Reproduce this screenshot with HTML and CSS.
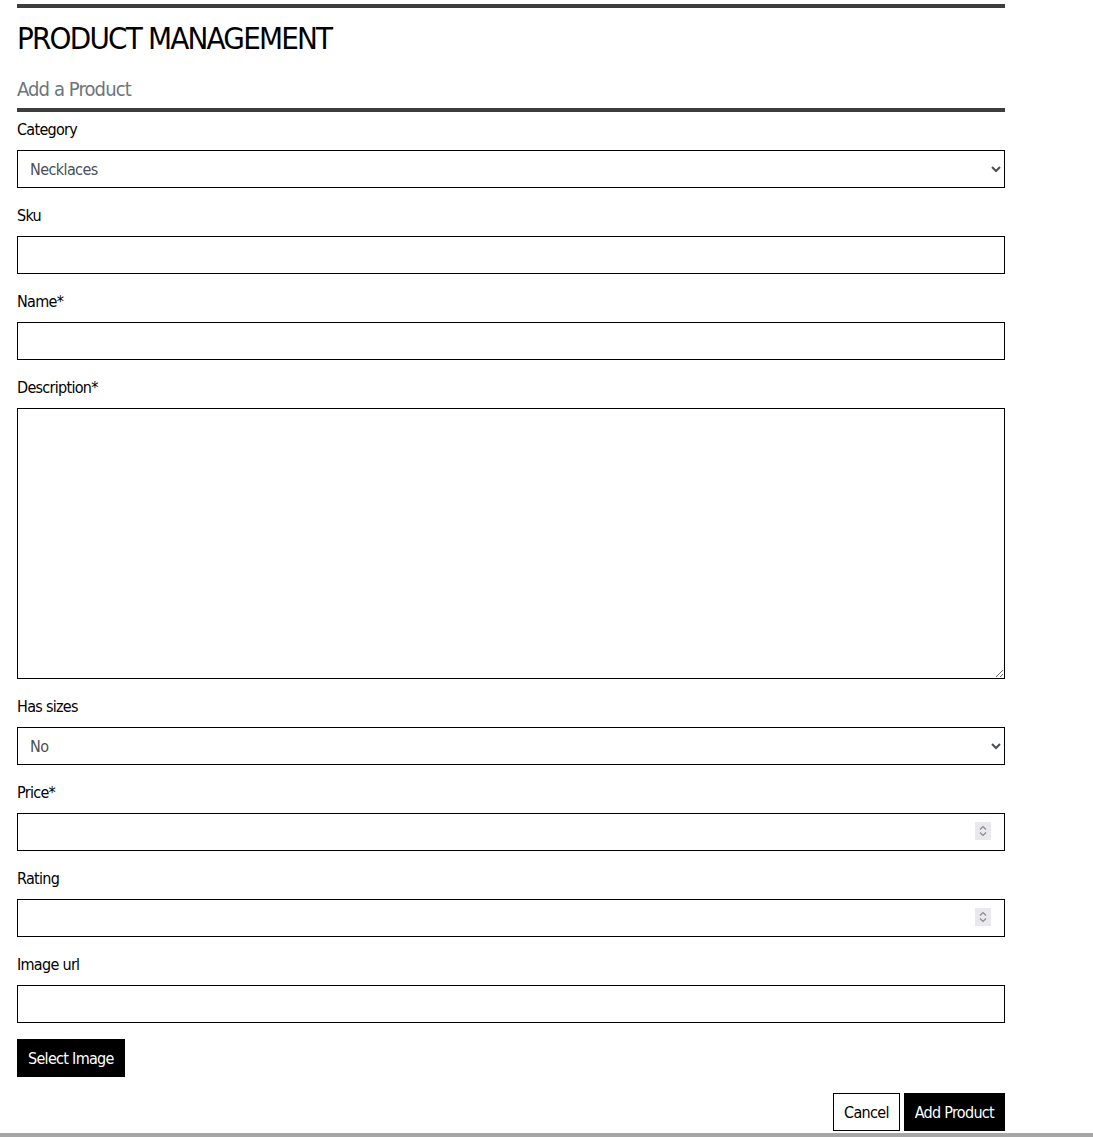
FILE: index.html
```html
<!DOCTYPE html>
<html lang="en">
<head>
    <meta charset="UTF-8">
    <meta name="viewport" content="width=device-width, initial-scale=1.0">
    <title>Product Management</title>
    <link rel="stylesheet" href="styles.css">
</head>
<body>
    <div class="page">
        <div class="rule"></div>
        <h1 class="page-title">PRODUCT MANAGEMENT</h1>
        <h2 class="sub-title">Add a Product</h2>
        <div class="rule"></div>

        <form class="product-form">
            <div class="field">
                <label for="category">Category</label>
                <select id="category" name="category">
                    <option>Necklaces</option>
                    <option>Rings</option>
                    <option>Earrings</option>
                </select>
            </div>
            <div class="field">
                <label for="sku">Sku</label>
                <input type="text" id="sku" name="sku">
            </div>
            <div class="field">
                <label for="name">Name*</label>
                <input type="text" id="name" name="name">
            </div>
            <div class="field">
                <label for="description">Description*</label>
                <textarea id="description" name="description"></textarea>
            </div>
            <div class="field">
                <label for="has_sizes">Has sizes</label>
                <select id="has_sizes" name="has_sizes">
                    <option>No</option>
                    <option>Yes</option>
                </select>
            </div>
            <div class="field">
                <label for="price">Price*</label>
                <div class="number-wrap">
                    <input type="number" id="price" name="price" step="0.01">
                    <span class="spinner"><svg width="16" height="18" viewBox="0 0 16 18"><path d="M5 7.5 8 4.5 11 7.5M5 10.5 8 13.5 11 10.5" fill="none" stroke="#8a8a8a" stroke-width="1.2"/></svg></span>
                </div>
            </div>
            <div class="field">
                <label for="rating">Rating</label>
                <div class="number-wrap">
                    <input type="number" id="rating" name="rating" step="0.01">
                    <span class="spinner"><svg width="16" height="18" viewBox="0 0 16 18"><path d="M5 7.5 8 4.5 11 7.5M5 10.5 8 13.5 11 10.5" fill="none" stroke="#8a8a8a" stroke-width="1.2"/></svg></span>
                </div>
            </div>
            <div class="field">
                <label for="image_url">Image url</label>
                <input type="url" id="image_url" name="image_url">
            </div>
            <button type="button" class="btn btn-dark">Select Image</button>
            <div class="actions">
                <button type="button" class="btn btn-outline">Cancel</button>
                <button type="submit" class="btn btn-dark">Add Product</button>
            </div>
        </form>
    </div>
    <footer class="footer"></footer>
</body>
</html>
```

FILE: styles.css
```css
body { margin: 0; font-family: "Liberation Sans Narrow", "DejaVu Sans Condensed", sans-serif; font-stretch: condensed; color: #000; background: #fff; }
.page { width: 988px; margin-left: 17px; padding-top: 4px; }
.rule { height: 4px; background: #3d3d3d; }
.page-title { font-size: 31px; font-weight: normal; letter-spacing: -1.8px; line-height: 44px; margin: 8px 0 0; }
.sub-title { font-size: 20px; font-weight: normal; letter-spacing: -0.9px; color: #6c757d; line-height: 30px; margin: 14px 0 4px; }
.field { display: flex; flex-direction: column; margin-bottom: 10px; }
.field label { display: block; font-size: 16px; letter-spacing: -0.7px; line-height: 24px; margin: 6px 0 8px; }
input, select, textarea {
    display: block;
    width: 100%;
    box-sizing: border-box;
    height: 38px;
    border: 1px solid #000;
    border-radius: 0;
    padding: 0 12px;
    font-family: inherit;
    font-size: 16px;
    letter-spacing: -0.6px;
    color: #495057;
    background: #fff;
}
select { padding-left: 8px; }
textarea { height: 271px; padding: 6px 12px; }
.number-wrap { position: relative; }
.spinner { position: absolute; right: 14px; top: 9px; width: 16px; height: 18px; background: #e9e9ed; }
.spinner svg { display: block; }
.btn { font-family: inherit; font-size: 16px; letter-spacing: -0.7px; height: 38px; padding: 0 10px; border: 1px solid #000; border-radius: 0; cursor: pointer; }
.btn-dark { background: #000; color: #fff; }
.btn-outline { background: #fff; color: #000; }
.product-form > .btn { margin-top: 6px; }
.actions { display: flex; justify-content: flex-end; gap: 4px; margin-top: 16px; }
.footer { border-top: 4px solid #a6a6a6; height: 40px; margin-top: 2px; }
```
